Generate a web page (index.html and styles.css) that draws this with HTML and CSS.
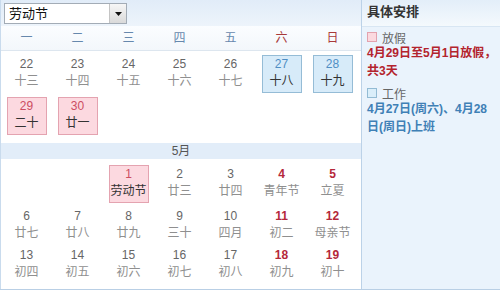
FILE: index.html
```html
<!DOCTYPE html>
<html lang="zh-CN">
<head>
<meta charset="utf-8">
<title>劳动节</title>
<link rel="stylesheet" href="styles.css">
</head>
<body>
<div class="cal">
  <div class="main">
    <div class="toolbar">
      <div class="select">
        <span class="sel-text">劳动节</span>
        <span class="sel-btn"><svg width="7" height="4" viewBox="0 0 7 4"><path d="M0 0H7L3.5 4Z" fill="#111"/></svg></span>
      </div>
    </div>
    <div class="weekdays">
      <span>一</span><span>二</span><span>三</span><span>四</span><span>五</span><span class="we">六</span><span class="we">日</span>
    </div>
    <div class="days first">
      <div class="cell"><div class="day"><span class="n">22</span><span class="l">十三</span></div></div>
      <div class="cell"><div class="day"><span class="n">23</span><span class="l">十四</span></div></div>
      <div class="cell"><div class="day"><span class="n">24</span><span class="l">十五</span></div></div>
      <div class="cell"><div class="day"><span class="n">25</span><span class="l">十六</span></div></div>
      <div class="cell"><div class="day"><span class="n">26</span><span class="l">十七</span></div></div>
      <div class="cell"><div class="day work"><span class="n">27</span><span class="l">十八</span></div></div>
      <div class="cell"><div class="day work"><span class="n">28</span><span class="l">十九</span></div></div>
      <div class="cell"><div class="day rest"><span class="n">29</span><span class="l">二十</span></div></div>
      <div class="cell"><div class="day rest"><span class="n">30</span><span class="l">廿一</span></div></div>
    </div>
    <div class="month-bar">5月</div>
    <div class="days second">
      <div class="cell"></div>
      <div class="cell"></div>
      <div class="cell"><div class="day rest"><span class="n">1</span><span class="l">劳动节</span></div></div>
      <div class="cell"><div class="day"><span class="n">2</span><span class="l">廿三</span></div></div>
      <div class="cell"><div class="day"><span class="n">3</span><span class="l">廿四</span></div></div>
      <div class="cell"><div class="day wk"><span class="n">4</span><span class="l">青年节</span></div></div>
      <div class="cell"><div class="day wk"><span class="n">5</span><span class="l">立夏</span></div></div>
      <div class="cell"><div class="day"><span class="n">6</span><span class="l">廿七</span></div></div>
      <div class="cell"><div class="day"><span class="n">7</span><span class="l">廿八</span></div></div>
      <div class="cell"><div class="day"><span class="n">8</span><span class="l">廿九</span></div></div>
      <div class="cell"><div class="day"><span class="n">9</span><span class="l">三十</span></div></div>
      <div class="cell"><div class="day"><span class="n">10</span><span class="l">四月</span></div></div>
      <div class="cell"><div class="day wk"><span class="n">11</span><span class="l">初二</span></div></div>
      <div class="cell"><div class="day wk"><span class="n">12</span><span class="l">母亲节</span></div></div>
      <div class="cell"><div class="day"><span class="n">13</span><span class="l">初四</span></div></div>
      <div class="cell"><div class="day"><span class="n">14</span><span class="l">初五</span></div></div>
      <div class="cell"><div class="day"><span class="n">15</span><span class="l">初六</span></div></div>
      <div class="cell"><div class="day"><span class="n">16</span><span class="l">初七</span></div></div>
      <div class="cell"><div class="day"><span class="n">17</span><span class="l">初八</span></div></div>
      <div class="cell"><div class="day wk"><span class="n">18</span><span class="l">初九</span></div></div>
      <div class="cell"><div class="day wk"><span class="n">19</span><span class="l">初十</span></div></div>
    </div>
  </div>
  <aside class="side">
    <div class="side-head">具体安排</div>
    <div class="legend"><span class="sq sq-rest"></span>放假</div>
    <p class="note note-rest">4月29日至5月1日放假，共3天</p>
    <div class="legend legend-2"><span class="sq sq-work"></span>工作</div>
    <p class="note note-work">4月27日(周六)、4月28日(周日)上班</p>
  </aside>
</div>
</body>
</html>
```
FILE: styles.css
```css
html, body {
  margin: 0;
  padding: 0;
  background: #fff;
}
body {
  font-family: "Liberation Sans", "Noto Sans CJK SC", sans-serif;
  font-size: 12px;
  color: #666;
}
.cal {
  display: flex;
  width: 500px;
  height: 290px;
  box-sizing: border-box;
  border-bottom: 1px solid #b9cfe5;
}
.main {
  width: 360px;
  border-left: 1px solid #c9dbed;
  background: #fff;
}
.toolbar {
  height: 26px;
  background: linear-gradient(#e1ecf8, #edf4fb);
  padding: 3px 0 0 3px;
  box-sizing: border-box;
}
.select {
  display: flex;
  width: 123px;
  height: 21px;
  box-sizing: border-box;
  border: 1px solid #a3acb6;
  background: #fff;
}
.sel-text {
  flex: 1;
  padding-left: 4px;
  line-height: 19px;
  font-size: 13px;
  color: #111;
}
.sel-btn {
  width: 16px;
  display: flex;
  align-items: center;
  justify-content: center;
  border-left: 1px solid #c4c4c4;
  background: linear-gradient(#f6f6f6, #dadada);
}
.weekdays {
  display: grid;
  grid-template-columns: repeat(7, 51px);
  height: 24px;
  line-height: 24px;
  text-align: center;
  color: #6688ad;
  border-bottom: 1px solid #dde6ef;
  background: linear-gradient(#fbfdff, #f3f7fb);
}
.weekdays .we {
  color: #a83a3a;
}
.days {
  display: grid;
  grid-template-columns: repeat(7, 51px);
}
.days.first {
  padding: 2px 0 6px;
}
.days.second {
  padding-top: 4px;
}
.cell {
  padding: 2px 0;
}
.day {
  width: 40px;
  margin: 0 auto;
  padding-top: 1px;
  box-sizing: border-box;
  text-align: center;
}
.day .n {
  display: block;
  line-height: 16px;
  color: #666;
}
.day .l {
  display: block;
  line-height: 18px;
  color: #8f8f8f;
}
.day.wk .n {
  color: #b5283a;
  font-weight: bold;
}
.day.work,
.day.rest {
  height: 38px;
  border: 1px solid;
  padding: 0 0 2px;
}
.day.work {
  background: #d7ebf9;
  border-color: #95bcd6;
}
.day.work .n {
  color: #4f8ec4;
}
.day.rest {
  background: #fcd9e0;
  border-color: #e4a3b0;
}
.day.rest .n {
  color: #cd4d62;
}
.day.work .l,
.day.rest .l {
  color: #333;
}
.month-bar {
  height: 16px;
  line-height: 16px;
  text-align: center;
  background: #e2edf9;
  color: #555;
}
.side {
  width: 139px;
  box-sizing: border-box;
  border-left: 1px solid #bcd2e8;
  background: #eaf3fc;
}
.side-head {
  height: 27px;
  box-sizing: border-box;
  padding-left: 5px;
  line-height: 24px;
  font-size: 13px;
  font-weight: bold;
  color: #333;
  background: linear-gradient(#e3eef9, #f4f9fd);
  border-bottom: 1px solid #d8e6f3;
}
.legend {
  display: flex;
  align-items: center;
  height: 14px;
  margin: 3px 0 0 5px;
  color: #666;
}
.legend-2 {
  margin-top: 6px;
}
.sq {
  width: 10px;
  height: 10px;
  box-sizing: border-box;
  border: 1px solid;
  margin-right: 5px;
}
.sq-rest {
  background: #fbd9df;
  border-color: #e2a2ae;
}
.sq-work {
  background: #daeefa;
  border-color: #93bbd4;
}
.note {
  margin: 0;
  padding: 0 2px 0 5px;
  line-height: 18px;
  font-weight: bold;
}
.note-rest {
  color: #b3232d;
}
.note-work {
  color: #3f80b6;
}
```
